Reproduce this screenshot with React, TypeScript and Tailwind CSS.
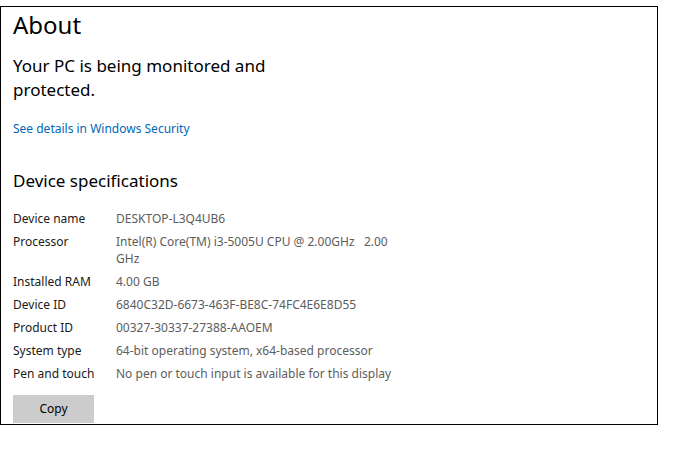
import React from "react";

const rows: { label: string; value: string }[] = [
  { label: "Device name", value: "DESKTOP-L3Q4UB6" },
  { label: "Processor", value: "Intel(R) Core(TM) i3-5005U CPU @ 2.00GHz   2.00 GHz" },
  { label: "Installed RAM", value: "4.00 GB" },
  { label: "Device ID", value: "6840C32D-6673-463F-BE8C-74FC4E6E8D55" },
  { label: "Product ID", value: "00327-30337-27388-AAOEM" },
  { label: "System type", value: "64-bit operating system, x64-based processor" },
  { label: "Pen and touch", value: "No pen or touch input is available for this display" },
];

export default function App() {
  return (
    <div className="w-[700px] h-[455px] bg-white pt-[6px]" style={{ fontFamily: '"Noto Sans", "Open Sans", sans-serif' }}>
      <div className="w-[658px] h-[419px] border border-black bg-white pl-[12px] flex flex-col items-start">
        <h1 className="text-[24px] leading-[32px] text-black mt-[2px]">About</h1>
        <p className="text-[17px] leading-[24px] text-black mt-[13px] w-[270px]">
          Your PC is being monitored and protected.
        </p>
        <a className="text-[12px] leading-[16px] text-[#0067b8] mt-[19px]">See details in Windows Security</a>
        <h2 className="text-[17px] leading-[24px] text-black mt-[32px]">Device specifications</h2>
        <div className="mt-[14px] flex flex-col text-[12px] leading-[17px]">
          {rows.map((r) => (
            <div key={r.label} className="flex py-[3px]">
              <div className="w-[103px] text-[#1a1a1a] shrink-0">{r.label}</div>
              <div className="w-[285px] text-[#5d5d5d] whitespace-pre-wrap">{r.value}</div>
            </div>
          ))}
        </div>
        <button className="mt-[10px] w-[81px] h-[28px] bg-[#cccccc] text-[12px] text-black">Copy</button>
      </div>
    </div>
  );
}
